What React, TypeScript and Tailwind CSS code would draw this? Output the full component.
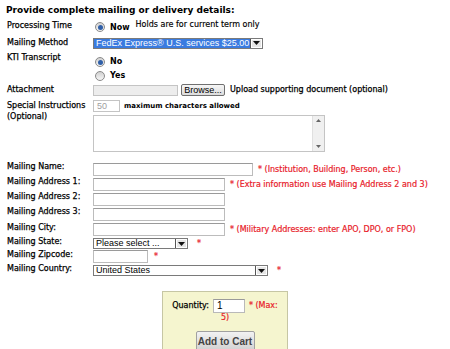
import React from 'react'

const verdana = { fontFamily: '"DejaVu Sans", Verdana, sans-serif' }
const arial = { fontFamily: '"Liberation Sans", Arial, sans-serif' }

function Radio({ checked }: { checked?: boolean }) {
  return (
    <span className="inline-flex items-center justify-center w-[10px] h-[10px] rounded-full border border-[#8a8a8a] bg-gradient-to-b from-[#d0d0d0] to-[#f6f6f6] shrink-0">
      {checked && <span className="w-[5px] h-[5px] rounded-full bg-[#2f5fa8]" />}
    </span>
  )
}

function Arrow() {
  return (
    <span className="flex items-center justify-center w-[12px] h-full bg-[#e6e6e6] border-l border-[#555] shadow-[inset_0_0_0_1px_#fff]">
      <svg width="7" height="4" viewBox="0 0 7 4"><path d="M0 0H7L3.5 4Z" fill="#111" /></svg>
    </span>
  )
}

function Select({ w, text, active }: { w: number; text: string; active?: boolean }) {
  return (
    <div style={{ width: w, ...arial }} className="flex h-[11px] border border-[#7a7a7a] bg-white text-[9px] leading-[9px] shrink-0">
      <span className={`flex-1 pl-[2px] whitespace-nowrap overflow-hidden ${active ? 'bg-[#3a7be0] text-white' : 'text-black'}`}>{text}</span>
      <Arrow />
    </div>
  )
}

function Input({ w }: { w: number }) {
  return <div style={{ width: w }} className="h-[13px] border border-[#bcbcbc] border-t-[#9a9a9a] bg-white shrink-0" />
}

function Label({ children }: { children: React.ReactNode }) {
  return <div className="w-[93px] shrink-0 pl-[7px] text-[8px] leading-[10px] text-black whitespace-nowrap [-webkit-text-stroke:0.25px]">{children}</div>
}

function Star({ gap, children }: { gap: number; children: React.ReactNode }) {
  return <span style={{ marginLeft: gap }} className="text-[#e8202a] text-[8px] leading-[10px] whitespace-nowrap [-webkit-text-stroke:0.2px]">{children}</span>
}

export default function App() {
  return (
    <div style={verdana} className="w-[450px] h-[349px] bg-white overflow-hidden text-black">
      <h1 className="h-[20px] pl-[6px] pt-[5px] text-[9px] font-bold leading-[11px] whitespace-nowrap">Provide complete mailing or delivery details:</h1>

      <div className="flex items-center h-[14px]">
        <Label><div className="-mt-[3px]">Processing Time</div></Label>
        <div className="flex items-center pl-[2px]">
          <Radio checked />
          <span className="font-bold text-[8px] ml-[5px] mt-[2px]">Now</span>
          <span className="text-[8px] ml-[6px] -mt-[4px] [-webkit-text-stroke:0.15px]">Holds are for current term only</span>
        </div>
      </div>

      <div className="flex items-center h-[14px] mt-[2px]">
        <Label><div className="-mt-[1px]">Mailing Method</div></Label>
        <Select w={170} text="FedEx Express® U.S. services $25.00" active />
      </div>

      <div className="flex h-[32px] mt-[1px]">
        <Label><div className="pt-[2px]">KTI Transcript</div></Label>
        <div className="flex flex-col pl-[2px] pt-[6px] gap-[4px]">
          <div className="flex items-center"><Radio checked /><span className="font-bold text-[8px] ml-[5px] leading-[10px]">No</span></div>
          <div className="flex items-center"><Radio /><span className="font-bold text-[8px] ml-[5px] leading-[10px]">Yes</span></div>
        </div>
      </div>

      <div className="flex items-center h-[14px]">
        <Label>Attachment</Label>
        <div className="w-[85px] h-[11px] border border-[#c4c4c4] bg-[#ededed] shrink-0" />
        <div style={arial} className="ml-[3px] h-[12px] w-[44px] border border-[#707070] rounded-[2px] bg-gradient-to-b from-[#f6f6f6] to-[#dcdcdc] text-[9px] leading-[10px] text-center shrink-0">Browse...</div>
        <span className="text-[8px] ml-[5px] text-black whitespace-nowrap [-webkit-text-stroke:0.25px]">Upload supporting document (optional)</span>
      </div>

      <div className="flex h-[54px] mt-[1px]">
        <Label><div className="leading-[11px] pt-[2px]">Special Instructions<br />(Optional)</div></Label>
        <div className="flex flex-col pt-[2px]">
          <div className="flex items-center h-[12px]">
            <div style={arial} className="w-[27px] h-[12px] border border-[#c4c4c4] text-[9px] text-[#a0a0a0] pl-[3px] leading-[10px]">50</div>
            <span className="text-[7px] font-bold ml-[4px] whitespace-nowrap">maximum characters allowed</span>
          </div>
          <div className="flex w-[232px] h-[37px] border border-[#c4c4c4] mt-[3px]">
            <div className="flex-1" />
            <div className="w-[12px] bg-[#f0f0f0] border-l border-[#e0e0e0] flex flex-col justify-between items-center py-[3px]">
              <svg width="5" height="3" viewBox="0 0 5 3"><path d="M0 3H5L2.5 0Z" fill="#666" /></svg>
              <svg width="5" height="3" viewBox="0 0 5 3"><path d="M0 0H5L2.5 3Z" fill="#666" /></svg>
            </div>
          </div>
        </div>
      </div>

      <div className="flex flex-col mt-[10px]">
        <div className="flex items-start h-[15px]">
          <Label>Mailing Name:</Label>
          <div className="flex items-center mt-[1px]">
            <Input w={160} />
            <Star gap={5}>* (Institution, Building, Person, etc.)</Star>
          </div>
        </div>
        <div className="flex items-start h-[15px]">
          <Label>Mailing Address 1:</Label>
          <div className="flex items-center mt-[1px]">
            <Input w={132} />
            <Star gap={5}>* (Extra information use Mailing Address 2 and 3)</Star>
          </div>
        </div>
        <div className="flex items-start h-[15px]">
          <Label>Mailing Address 2:</Label>
          <div className="mt-[1px]"><Input w={132} /></div>
        </div>
        <div className="flex items-start h-[15px]">
          <Label>Mailing Address 3:</Label>
          <div className="mt-[1px]"><Input w={132} /></div>
        </div>
        <div className="flex items-start h-[15px]">
          <Label><div className="pt-[1px]">Mailing City:</div></Label>
          <div className="flex items-center mt-[1px]">
            <Input w={132} />
            <Star gap={5}>* (Military Addresses: enter APO, DPO, or FPO)</Star>
          </div>
        </div>
        <div className="flex items-start h-[12px]">
          <Label>Mailing State:</Label>
          <div className="flex items-center mt-[1px]">
            <Select w={95} text="Please select ..." />
            <Star gap={9}>*</Star>
          </div>
        </div>
        <div className="flex items-start h-[15px]">
          <Label><div className="pt-[1px]">Mailing Zipcode:</div></Label>
          <div className="flex items-center mt-[1px]">
            <Input w={55} />
            <Star gap={6}>*</Star>
          </div>
        </div>
        <div className="flex items-start h-[12px]">
          <Label>Mailing Country:</Label>
          <div className="flex items-center mt-[1px]">
            <Select w={175} text="United States" />
            <Star gap={9}>*</Star>
          </div>
        </div>
      </div>

      <div className="ml-[162px] mt-[15px] w-[126px] h-[70px] bg-[#f5f5cf] border border-[#c6c6a4] flex flex-col items-center pt-[7px]">
        <div className="flex items-center text-[8px] leading-[10px]">
          <span className="[-webkit-text-stroke:0.25px]">Quantity:</span>
          <div style={arial} className="ml-[4px] w-[32px] h-[14px] border border-[#b9b9b9] border-t-[#9a9a9a] bg-white text-[10px] pl-[3px] leading-[12px]">1</div>
          <span className="ml-[4px] text-[#e8202a] [-webkit-text-stroke:0.2px]">* (Max:</span>
        </div>
        <div className="text-[#e8202a] text-[8px] leading-[10px] [-webkit-text-stroke:0.2px]">5)</div>
        <div style={arial} className="mt-[8px] w-[59px] h-[20px] border border-[#a0a0a0] rounded-[2px] bg-gradient-to-b from-[#f2f2f2] to-[#d2d2d2] text-[10px] font-bold text-[#444] flex items-center justify-center">Add to Cart</div>
      </div>
    </div>
  )
}
